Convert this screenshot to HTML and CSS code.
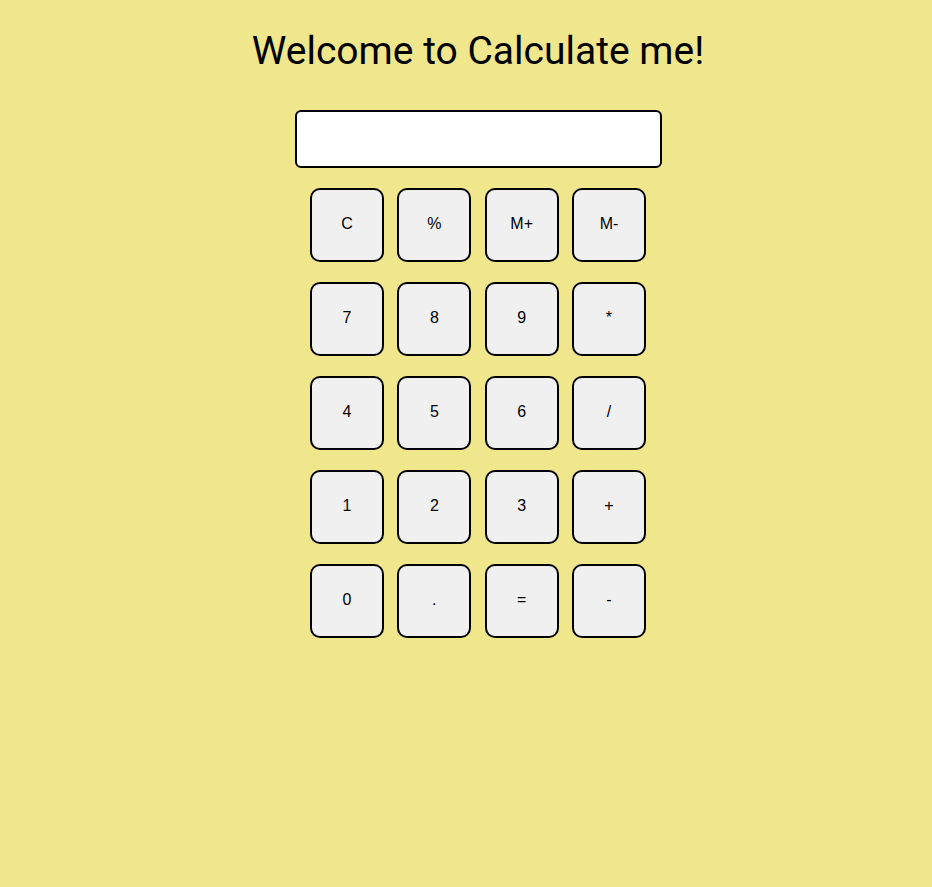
FILE: index.html
```html
<!DOCTYPE html>
<html>
<head>
<meta charset="utf-8">
<link rel="stylesheet" href="styles.css">
</head>
<body>
<div class="page">
  <h1 class="title">Welcome to Calculate me!</h1>
  <input class="display" type="text">
  <div class="keys">
    <button class="key">C</button>
    <button class="key">%</button>
    <button class="key">M+</button>
    <button class="key">M-</button>
    <button class="key">7</button>
    <button class="key">8</button>
    <button class="key">9</button>
    <button class="key">*</button>
    <button class="key">4</button>
    <button class="key">5</button>
    <button class="key">6</button>
    <button class="key">/</button>
    <button class="key">1</button>
    <button class="key">2</button>
    <button class="key">3</button>
    <button class="key">+</button>
    <button class="key">0</button>
    <button class="key">.</button>
    <button class="key">=</button>
    <button class="key">-</button>
  </div>
</div>
</body>
</html>
```
FILE: styles.css
```css
html, body {
  margin: 0;
  padding: 0;
  background: #f0e68c;
  height: 100%;
}
.page {
  display: flex;
  flex-direction: column;
  align-items: center;
  padding-left: 24px;
}
.title {
  font-family: Roboto, sans-serif;
  font-weight: 400;
  font-size: 39px;
  line-height: 48px;
  margin: 27px 0 0;
  color: #000;
}
.display {
  box-sizing: border-box;
  width: 367px;
  height: 58px;
  margin-top: 35px;
  border: 2px solid #000;
  border-radius: 6px;
  background: #fff;
  padding: 0 8px;
}
.keys {
  display: grid;
  grid-template-columns: repeat(4, 74px);
  gap: 20px 13.33px;
  margin-top: 20px;
}
.key {
  box-sizing: border-box;
  width: 74px;
  height: 74px;
  border: 2px solid #000;
  border-radius: 10px;
  background: #f0f0f0;
  font-family: "Liberation Sans", Arial, sans-serif;
  font-size: 16px;
  color: #000;
  padding: 0 0 3px;
}
```
